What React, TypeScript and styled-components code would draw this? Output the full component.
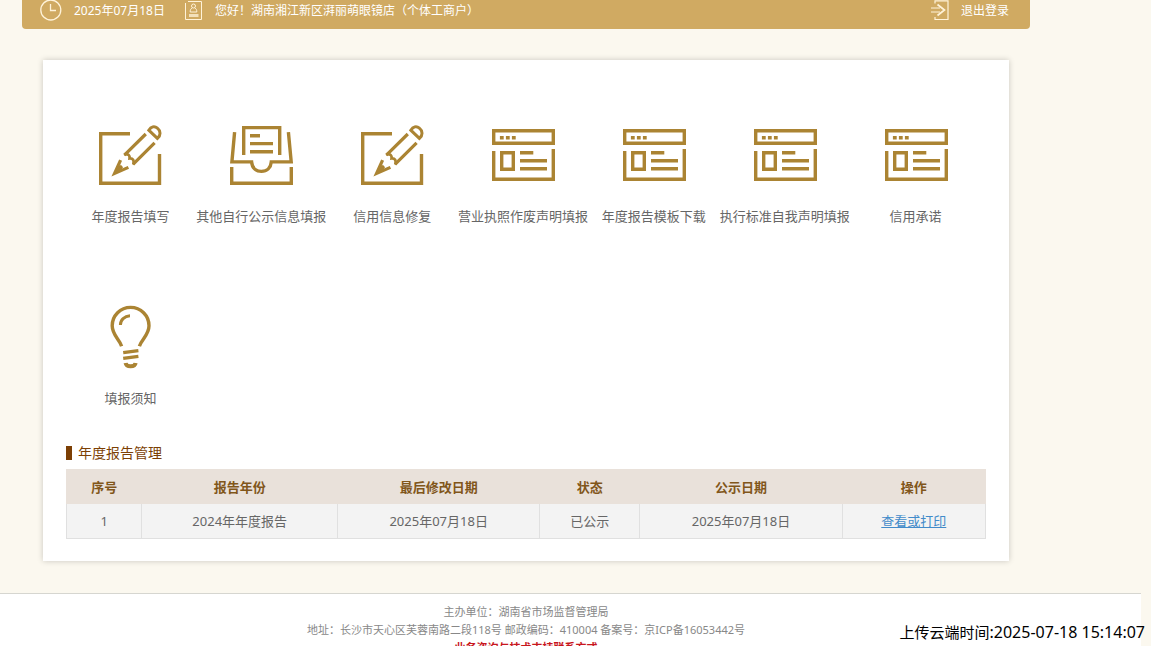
import React from "react";
import styled, { createGlobalStyle } from "styled-components";

const GlobalStyle = createGlobalStyle`
  * { box-sizing: border-box; }
  body {
    margin: 0;
    background: #fbf8ef;
    color: #666;
    font-family: "Noto Sans", "Noto Sans CJK SC", sans-serif;
    font-size: 13px;
  }
`;

const Page = styled.div`
  position: relative;
  display: flex;
  flex-direction: column;
  height: 100vh;
  overflow: hidden;
`;

const Main = styled.main`
  flex: none;
  padding: 0 121px 32px 22px;
`;

const TopBar = styled.header`
  display: flex;
  align-items: center;
  height: 29px;
  padding: 0 21px 8px 18px;
  border-radius: 0 0 4px 4px;
  background: #d0aa62;
  color: #fff;
  font-size: 12px;
  line-height: 20px;
  white-space: nowrap;
`;

const BarItem = styled.div`
  display: flex;
  align-items: center;
  gap: 12px;
  margin-right: 20px;
`;

const LogoutLink = styled.a`
  display: flex;
  align-items: center;
  gap: 12px;
  margin-left: auto;
  color: inherit;
  text-decoration: none;
`;

const BarIcon = styled.svg`
  display: block;
  flex: none;
  fill: none;
  stroke: #fff3d9;
  overflow: visible;
`;

const Card = styled.section`
  margin: 31px 21px 0;
  padding: 64px 23px 22px;
  background: #fff;
  box-shadow: 0 0 6px rgba(0, 0, 0, 0.2);
`;

const Tiles = styled.nav`
  display: grid;
  grid-template-columns: repeat(7, minmax(0, 1fr));
  row-gap: 80px;
  margin: 0 5px 0 -1px;
`;

const Tile = styled.a`
  display: flex;
  flex-direction: column;
  align-items: center;
  gap: 18px;
  color: #666;
  line-height: 20px;
  text-decoration: none;
  white-space: nowrap;
`;

const TileIcon = styled.svg`
  display: block;
  width: 64px;
  height: 64px;
  fill: none;
  stroke: #ab8433;
  stroke-width: 3.4;
  overflow: visible;
`;

const SectionTitle = styled.h2`
  display: flex;
  align-items: center;
  gap: 6px;
  margin: 35px 0 6px;
  color: #7c3f04;
  font-size: 14px;
  font-weight: 400;
  line-height: 20px;

  &::before {
    content: "";
    width: 6px;
    height: 14px;
    background: #7c3f04;
  }
`;

const Table = styled.table`
  width: 100%;
  border-collapse: collapse;
  table-layout: fixed;
  text-align: center;
  line-height: 20px;
`;

const HeadCell = styled.th<{ $width: string }>`
  width: ${(p) => p.$width};
  height: 34px;
  padding: 0;
  border: 1px solid #e9e1da;
  background: #e9e1da;
  color: #81561a;
`;

const Cell = styled.td`
  height: 35px;
  padding: 0;
  border: 1px solid #e0e0e0;
  background: #f3f3f3;
`;

const CellLink = styled.a`
  color: #428bca;
  text-decoration: underline;
`;

const Footer = styled.footer`
  flex: 1 0 auto;
  margin-right: 10px;
  padding: 9px 89px 0 0;
  border-top: 1px solid #d6d6d0;
  background: #fff;
  color: #888;
  font-size: 11px;
  line-height: 18px;
  text-align: center;
`;

const FooterLine = styled.p`
  margin: 0;
`;

const Contact = styled(FooterLine)`
  color: #c8161d;
  font-weight: 700;
`;

const Stamp = styled.div`
  position: absolute;
  right: 6px;
  bottom: 3px;
  display: flex;
  align-items: baseline;
  color: #000;
  font-size: 16px;
  line-height: 22px;
  white-space: nowrap;
`;

const StampLabel = styled.span`
  font-size: 15px;
`;

const PencilIcon = () => (
  <TileIcon viewBox="0 0 64 64" aria-hidden="true">
    <path d="M32 9.7H2.7V59.3H61.5V30" />
    <path d="M47.8 10L26.4 31.2M35 40.4L56.6 18.8" strokeWidth="3.2" />
    <path d="M26 30.4C30.6 29.6 32 31.4 31.6 34.4C35 34.2 36.4 36 35.4 40.6" strokeWidth="2.8" />
    <path d="M50.8 6.2C53 2.6 56.4 1.6 59.4 4.2C62.8 7 63 11.2 59.4 14.4Z" strokeWidth="3" />
    <path d="M22.6 36.2L16.6 49.4L30.4 43.4M16.6 49.4L24 42" strokeWidth="3.2" />
  </TileIcon>
);

const InboxIcon = () => (
  <TileIcon viewBox="0 0 64 64" aria-hidden="true">
    <path d="M2.7 43V59.3H62.3V43" />
    <path d="M5.6 8.2L2.9 37.9H22.6C23 43.8 26.8 47.4 32.4 47.4S41.8 43.8 42.3 37.9H62.2L59.4 8.2" />
    <path d="M14.7 31V3.6H50.7V31" />
    <path d="M21 11.7H31M21 19.6H44M21 27.7H44" />
  </TileIcon>
);

const WindowIcon = () => (
  <TileIcon viewBox="0 0 64 64" aria-hidden="true">
    <path d="M2.7 6.7H62.3V19.3H2.7Z" />
    <path d="M8.9 13.7H12.7M14.9 13.7H18.7M20.9 13.7H24.7" />
    <path d="M2.7 27V55.3H62.3V25" />
    <path d="M10.7 28.7H22.3V45.3H10.7Z" />
    <path d="M29 28.7H42.3M29 36.7H56M29 44.7H56" />
  </TileIcon>
);

const BulbIcon = () => (
  <TileIcon viewBox="0 0 64 64" aria-hidden="true">
    <path d="M23.6 40.2C21.4 33.2 14.2 29 14.2 19.8A18.4 18.4 0 0 1 51 19.8C51 29 43.6 33.2 41.4 40.2" />
    <path d="M22.4 19C22.4 14 26.4 10 32 9.8" strokeWidth="3" />
    <path d="M25.2 46.6L40.4 44.6M25.2 52.4L40.4 50.4" />
    <path d="M27.6 57C28.2 61.4 37 61.4 37.6 57" strokeWidth="4" />
  </TileIcon>
);

const ClockIcon = () => (
  <BarIcon width="22" height="22" viewBox="0 0 22 22" aria-hidden="true">
    <circle cx="10.8" cy="10" r="10" strokeWidth="1.3" />
    <path d="M10.5 4V10.5H16" strokeWidth="1.3" />
  </BarIcon>
);

const UserCardIcon = () => (
  <BarIcon width="18" height="20" viewBox="0 0 18 20" aria-hidden="true">
    <path d="M3 .5H16.5V18.5H.5V2" />
    <circle cx="8.5" cy="5" r="2" />
    <path d="M7.2 7C5.4 8 5.2 9.2 5.2 11H11.8C11.8 9.2 11.6 8 9.8 7" />
    <path d="M4 14.5H13.5" strokeWidth="3" opacity=".75" />
  </BarIcon>
);

const LogoutIcon = () => (
  <BarIcon width="18" height="20" viewBox="0 0 18 20" aria-hidden="true">
    <path d="M4 2.5V-.2H17V18.5H4V16" strokeWidth="1.2" />
    <path d="M0 7H9M0 11H9" />
    <path d="M6.5 3.5L13.5 9L6.5 14.5" strokeWidth="1.7" />
  </BarIcon>
);

const tiles = [
  { label: "年度报告填写", Icon: PencilIcon },
  { label: "其他自行公示信息填报", Icon: InboxIcon },
  { label: "信用信息修复", Icon: PencilIcon },
  { label: "营业执照作废声明填报", Icon: WindowIcon },
  { label: "年度报告模板下载", Icon: WindowIcon },
  { label: "执行标准自我声明填报", Icon: WindowIcon },
  { label: "信用承诺", Icon: WindowIcon },
  { label: "填报须知", Icon: BulbIcon },
];

const columns = [
  { label: "序号", width: "8.2%" },
  { label: "报告年份", width: "21.3%" },
  { label: "最后修改日期", width: "22%" },
  { label: "状态", width: "10.9%" },
  { label: "公示日期", width: "22%" },
  { label: "操作", width: "15.6%" },
];

export default function App() {
  return (
    <Page>
      <GlobalStyle />
      <Main>
        <TopBar>
          <BarItem>
            <ClockIcon />
            <span>2025年07月18日</span>
          </BarItem>
          <BarItem>
            <UserCardIcon />
            <span>您好！湖南湘江新区湃丽萌眼镜店（个体工商户）</span>
          </BarItem>
          <LogoutLink href="#logout">
            <LogoutIcon />
            <span>退出登录</span>
          </LogoutLink>
        </TopBar>
        <Card>
          <Tiles>
            {tiles.map(({ label, Icon }) => (
              <Tile href="#" key={label}>
                <Icon />
                <span>{label}</span>
              </Tile>
            ))}
          </Tiles>
          <SectionTitle>年度报告管理</SectionTitle>
          <Table>
            <thead>
              <tr>
                {columns.map((c) => (
                  <HeadCell key={c.label} $width={c.width} scope="col">
                    {c.label}
                  </HeadCell>
                ))}
              </tr>
            </thead>
            <tbody>
              <tr>
                <Cell>1</Cell>
                <Cell>2024年年度报告</Cell>
                <Cell>2025年07月18日</Cell>
                <Cell>已公示</Cell>
                <Cell>2025年07月18日</Cell>
                <Cell>
                  <CellLink href="#report">查看或打印</CellLink>
                </Cell>
              </tr>
            </tbody>
          </Table>
        </Card>
      </Main>
      <Footer>
        <FooterLine>主办单位：湖南省市场监督管理局</FooterLine>
        <FooterLine>地址：长沙市天心区芙蓉南路二段118号 邮政编码：410004 备案号：京ICP备16053442号</FooterLine>
        <Contact>业务咨询与技术支持联系方式</Contact>
      </Footer>
      <Stamp>
        <StampLabel>上传云端时间</StampLabel>
        <span>:2025-07-18 15:14:07</span>
      </Stamp>
    </Page>
  );
}
